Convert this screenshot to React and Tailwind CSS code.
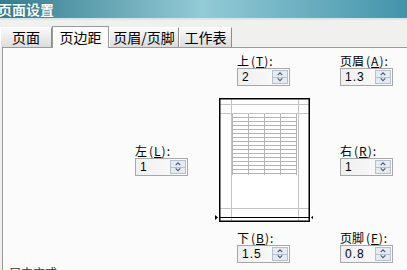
import React from "react"

const cjk = "font-['SimSun','Noto_Sans_CJK_SC',sans-serif]"

function Label({ text, k }) {
    return (
        <div className="h-[11px] text-[12px] leading-[11px] text-black whitespace-nowrap">
            <span className="relative -top-[2px]">
                {text}
                <span className="ml-[2px] tracking-[1px]">(<span className="underline">{k}</span>):</span>
            </span>
        </div>
    )
}

function SpinBox({ value }) {
    return (
        <div className="w-[53px] h-[18px] border border-[#a7a7a7] bg-gradient-to-r from-[#efefef] to-[#fdfdfd] flex items-center justify-between pl-[4px] pr-[1px]">
            <span className="font-['Liberation_Sans',sans-serif] text-[12px] tracking-[1px] leading-none text-black">{value}</span>
            <div className="w-[16px] h-[14px] border border-[#b7bfcc] bg-[#e6eaf1] flex flex-col">
                <svg width="14" height="6" viewBox="0 0 14 6">
                    <path d="M4.5 4.5 L7 2 L9.5 4.5" stroke="#4a5a7a" strokeWidth="1.2" fill="none" />
                </svg>
                <div className="h-px bg-[#b7bfcc]" />
                <svg width="14" height="6" viewBox="0 0 14 6">
                    <path d="M4.5 1.5 L7 4 L9.5 1.5" stroke="#4a5a7a" strokeWidth="1.2" fill="none" />
                </svg>
            </div>
        </div>
    )
}

function Preview() {
    const rows = []
    for (let y = 18; y <= 80; y += 4) rows.push(y)
    const cols = [19, 35, 51, 67, 83]
    return (
        <svg width="100" height="130" viewBox="0 0 100 130">
            <rect x="6" y="3" width="91" height="124" fill="#fff" />
            {rows.map(y => (
                <line key={"r" + y} x1="19" y1={y + 0.5} x2="83" y2={y + 0.5} stroke="#b4b4b4" strokeWidth="1" />
            ))}
            {cols.map(x => (
                <line key={"c" + x} x1={x + 0.5} y1="18" x2={x + 0.5} y2="80" stroke="#b4b4b4" strokeWidth="1" />
            ))}
            <line x1="18.5" y1="3" x2="18.5" y2="127" stroke="#c4c4c4" />
            <line x1="85.5" y1="3" x2="85.5" y2="127" stroke="#c4c4c4" />
            <line x1="6" y1="9.5" x2="97" y2="9.5" stroke="#c4c4c4" />
            <line x1="6" y1="18.5" x2="97" y2="18.5" stroke="#c4c4c4" />
            <line x1="6" y1="113.5" x2="97" y2="113.5" stroke="#c4c4c4" />
            <rect x="6.75" y="3.75" width="89.5" height="122.5" fill="none" stroke="#000" strokeWidth="1.5" />
            <line x1="6" y1="122.5" x2="97" y2="122.5" stroke="#000" strokeWidth="1" />
            <path d="M2 120 L5 122.5 L2 125 Z" fill="#000" />
            <path d="M101 120 L98 122.5 L101 125 Z" fill="#000" />
        </svg>
    )
}

function Tab({ children, active, w }) {
    if (active) {
        return (
            <div className={`${w} h-[22px] -mb-px relative z-10 bg-[#fbfbfb] border-t border-l border-r border-[#9a9a9a] text-[14px] leading-[20px] text-center text-black`}>
                {children}
            </div>
        )
    }
    return (
        <div className={`${w} h-[20px] bg-gradient-to-b from-[#fafafa] to-[#dcdcdc] border-t border-l border-white border-r border-r-[#8c8c8c] text-[14px] leading-[19px] text-center text-black`}>
            {children}
        </div>
    )
}

export default function App() {
    return (
        <div className={`w-[407px] h-[270px] overflow-hidden bg-[#f0f0ee] ${cjk}`}>
            <div className="h-[18px] bg-gradient-to-r from-[#317d8e] via-[#93cbd6] to-[#4194ab] text-white font-bold text-[14px] leading-[18px] -ml-[2px] [text-shadow:0_0_1px_#1d4d58]">
                页面设置
            </div>
            <div className="h-[2px] bg-[#d3e9ed]" />
            <div className="h-[5px]" />
            <div className="flex items-end h-[22px]">
                <Tab w="w-[52px]">页面</Tab>
                <Tab w="w-[57px]" active>页边距</Tab>
                <Tab w="w-[70px]">页眉/页脚</Tab>
                <Tab w="w-[53px]">工作表</Tab>
            </div>
            <div className="ml-[2px] h-[223px] border-l border-t border-[#9a9a9a] bg-[#fbfbfb]">
                <div className="flex h-[218px]">
                    <div className="ml-[132px] w-[54px] flex flex-col pt-[99px]">
                        <Label text="左" k="L" />
                        <SpinBox value="1" />
                    </div>
                    <div className="ml-[24px] w-[100px] flex flex-col pt-[9px]">
                        <div className="pl-[24px]">
                            <Label text="上" k="T" />
                            <SpinBox value="2" />
                        </div>
                        <div className="mt-[9px]">
                            <Preview />
                        </div>
                        <div className="pl-[24px] mt-[9px]">
                            <Label text="下" k="B" />
                            <SpinBox value="1.5" />
                        </div>
                    </div>
                    <div className="ml-[27px] w-[54px] flex flex-col pt-[9px]">
                        <Label text="页眉" k="A" />
                        <SpinBox value="1.3" />
                        <div className="h-[61px]" />
                        <Label text="右" k="R" />
                        <SpinBox value="1" />
                        <div className="h-[58px]" />
                        <Label text="页脚" k="F" />
                        <SpinBox value="0.8" />
                    </div>
                </div>
                <div className="pl-[6px] text-[12px] leading-[14px] text-[#333]">居中方式</div>
            </div>
        </div>
    )
}
